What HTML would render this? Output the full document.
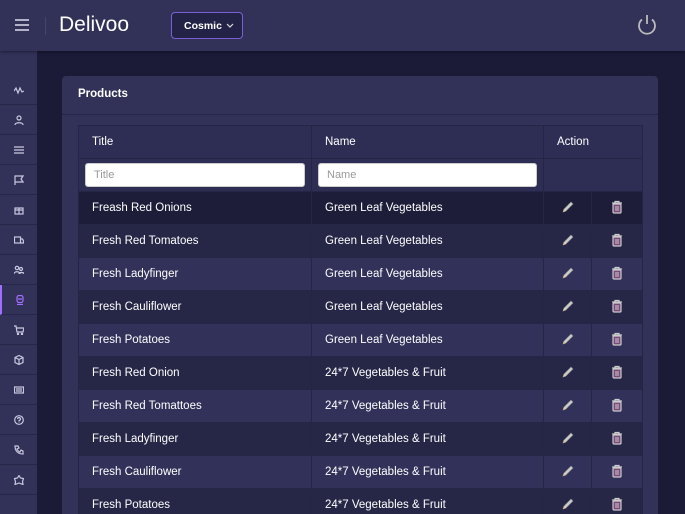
<!DOCTYPE html>
<html><head><style>
*{margin:0;padding:0;box-sizing:border-box}
html,body{width:685px;height:514px;overflow:hidden}
body{background:#1b1b38;font-family:"Liberation Sans",sans-serif;color:#fff;position:relative}
.hdr{position:absolute;left:0;top:0;width:685px;height:51px;background:#323259;box-shadow:0 1px 3px rgba(0,0,0,.4);z-index:2}
.side{position:absolute;left:0;top:51px;width:37px;height:463px;background:#323259}
.si{position:absolute;left:0;width:37px;height:30px;border-bottom:1px solid #262648;display:flex;align-items:center;justify-content:center}
.si svg{width:10px;height:10px;fill:none;stroke:#c8c8e0;stroke-width:1.2}
.card{position:absolute;left:62px;top:76px;width:596px;height:438px;background:#323259;border-radius:4px 4px 0 0;overflow:hidden}
.ct{position:absolute;left:16px;top:12px;font-size:11.5px;font-weight:bold}
.cl{position:absolute;left:0;top:38px;width:596px;height:1px;background:#262648}
table{position:absolute;left:16px;top:49px;border-collapse:collapse;font-size:11.5px;table-layout:fixed;width:564px}
td{border:1px solid #252545;height:33px;padding:0 13px;white-space:nowrap}
tr.h td{background:#2e2e55}
input{width:100%;height:24px;border-radius:3px;border:1px solid #ccc;background:#fff;padding:0 8px;font-size:11px;font-family:"Liberation Sans",sans-serif;color:#999}
td.f{padding:0 6px}
.ic{text-align:center;padding:0}
</style></head><body>
<div class="hdr">
<svg style="position:absolute;left:14px;top:19px" width="16" height="12"><path d="M1 1h14M1 6h14M1 11h14" stroke="#dcdcee" stroke-width="1.6"/></svg>
<div style="position:absolute;left:45px;top:17px;width:1px;height:18px;background:#444470"></div>
<div style="position:absolute;left:59px;top:13px;font-size:21px;">Delivoo</div>
<div style="position:absolute;left:171px;top:12px;width:72px;height:27px;border:1px solid #7b5fd6;border-radius:4px;background:#232347;font-size:10.5px;font-weight:bold;padding:7px 0 0 12px">Cosmic</div>
<svg style="position:absolute;left:226px;top:23px" width="8" height="6"><path d="M1 1l3 3 3-3" fill="none" stroke="#ddd" stroke-width="1.2"/></svg>
<svg style="position:absolute;left:636px;top:13px" width="22" height="24"><path d="M6 6.5A8 8 0 1 0 16 6.5" fill="none" stroke="#bbb" stroke-width="1.8"/><path d="M11 2v9" stroke="#bbb" stroke-width="1.8"/></svg>
</div>
<div class="side">
<div class="si" style="top:24px"><svg viewBox="0 0 10 10"><path d="M0 6l2-3 2 5 2-5 2 4 2-1"/></svg></div>
<div class="si" style="top:54px"><svg viewBox="0 0 10 10"><circle cx="5" cy="3" r="2"/><path d="M1 10c0-3 8-3 8 0"/></svg></div>
<div class="si" style="top:84px"><svg viewBox="0 0 10 10"><path d="M0 2h10M0 5h10M0 8h10"/></svg></div>
<div class="si" style="top:114px"><svg viewBox="0 0 10 10"><path d="M1 10V1h8l-2 3 2 3H1"/></svg></div>
<div class="si" style="top:144px"><svg viewBox="0 0 10 10"><rect x="1" y="3" width="8" height="6"/><path d="M5 3v6M1 5h8"/></svg></div>
<div class="si" style="top:174px"><svg viewBox="0 0 10 10"><rect x="0.5" y="2" width="6" height="6"/><path d="M6.5 4h2l1 2v2h-3"/></svg></div>
<div class="si" style="top:204px"><svg viewBox="0 0 10 10"><circle cx="3" cy="3" r="1.7"/><circle cx="7" cy="4" r="1.5"/><path d="M0 9c0-3 6-3 6 0M5 9c0-2 5-2 5 0"/></svg></div>
<div class="si" style="top:234px;border-left:2px solid #a16eff"><svg viewBox="0 0 10 10" style="stroke:#a16eff"><rect x="2" y="0.5" width="6" height="7" rx="2"/><path d="M2 9.5h6M3 4h4"/></svg></div>
<div class="si" style="top:264px"><svg viewBox="0 0 10 10"><path d="M0 1h2l1 6h6l1-4H2.5"/><circle cx="4" cy="9" r=".6"/><circle cx="8" cy="9" r=".6"/></svg></div>
<div class="si" style="top:294px"><svg viewBox="0 0 10 10"><path d="M5 0.5l4 2v5l-4 2-4-2v-5z"/><path d="M1 2.5l4 2 4-2M5 4.5v5"/></svg></div>
<div class="si" style="top:324px"><svg viewBox="0 0 10 10"><rect x="0.5" y="2" width="9" height="6"/><path d="M2 4h6M2 6h6"/></svg></div>
<div class="si" style="top:354px"><svg viewBox="0 0 10 10"><circle cx="5" cy="5" r="4.3"/><path d="M3.5 4a1.5 1.5 0 1 1 1.5 1.5v1M5 7.5v.5"/></svg></div>
<div class="si" style="top:384px"><svg viewBox="0 0 10 10"><path d="M1 1h3l1 2-2 1c1 2 2 3 3 3l1-2 2 1v3c-5 0-8-3-8-8z"/></svg></div>
<div class="si" style="top:414px"><svg viewBox="0 0 10 10"><path d="M5 .5l1.5 2.5 3 .5-1 3 .5 3-4-1.5-4 1.5.5-3-1-3 3-.5z"/></svg></div>
</div>
<div class="card">
<div class="ct">Products</div><div class="cl"></div>
<table>
<colgroup><col style="width:233px"><col style="width:232px"><col style="width:48px"><col style="width:51px"></colgroup>
<tr class="h"><td>Title</td><td>Name</td><td colspan="2">Action</td></tr>
<tr class="h"><td class="f"><input value="Title"></td><td class="f"><input value="Name"></td><td colspan="2"></td></tr>
<tbody id="b"></tbody>
</table>
</div>
<script>
var d=[["Freash Red Onions","Green Leaf Vegetables"],["Fresh Red Tomatoes","Green Leaf Vegetables"],["Fresh Ladyfinger","Green Leaf Vegetables"],["Fresh Cauliflower","Green Leaf Vegetables"],["Fresh Potatoes","Green Leaf Vegetables"],["Fresh Red Onion","24*7 Vegetables & Fruit"],["Fresh Red Tomattoes","24*7 Vegetables & Fruit"],["Fresh Ladyfinger","24*7 Vegetables & Fruit"],["Fresh Cauliflower","24*7 Vegetables & Fruit"],["Fresh Potatoes","24*7 Vegetables & Fruit"]];
var pen='<svg width="14" height="14" viewBox="0 0 14 14"><path d="M2 12l1-3 7-7 2 2-7 7z" fill="#ccc" stroke="#888" stroke-width=".6"/><path d="M2 12l1-3 2 2z" fill="#e8c9a0"/></svg>';
var tr='<svg width="12" height="14" viewBox="0 0 12 14"><path d="M1 3h10M4 3V1.5h4V3" fill="none" stroke="#ccc" stroke-width="1.2"/><rect x="2" y="4" width="8" height="9" rx="1" fill="#7a4a7a" stroke="#ccc" stroke-width="1.2"/><path d="M5 6v5M7 6v5" stroke="#ccc"/></svg>';
var h='';d.forEach(function(r,i){var bg=i==0?'#1d1d3a':(i%2?'#262647':'#31315a');if(i==5||i==7||i==9)bg='#262647';h+='<tr style="background:'+bg+'"><td>'+r[0]+'</td><td>'+r[1].replace('&','&amp;')+'</td><td class="ic">'+pen+'</td><td class="ic">'+tr+'</td></tr>'});
document.getElementById('b').innerHTML=h;
</script>
</body></html>
